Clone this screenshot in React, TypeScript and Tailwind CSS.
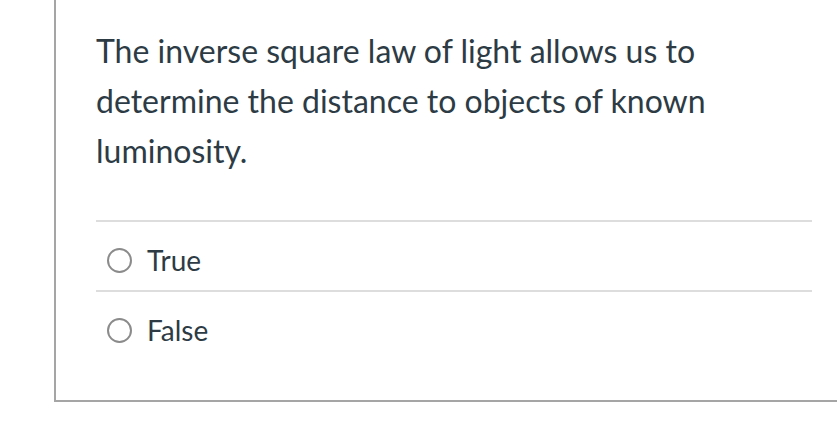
export default function App() {
  const options = ["True", "False"]
  return (
    <div className="h-[435px] w-[837px] overflow-hidden bg-white font-['Lato',sans-serif] text-[#2d3b45]">
      <div className="ml-[54px] w-[900px] border-b-2 border-l-2 border-[#a5a5a5] pb-[40px] pl-[40px] pt-[26px]">
        <div className="w-[716px]">
          <p className="w-[680px] text-[32px] leading-[50px]">
            The inverse square law of light allows us to determine the distance to objects of known luminosity.
          </p>
          <div className="mt-[44px]">
            {options.map((opt) => (
              <label key={opt} className="flex h-[70px] items-center border-t-2 border-[#dddddd] pl-[11px] pt-[8px]">
                <span className="h-[25px] w-[25px] shrink-0 rounded-full border-2 border-[#8b8b8b]" />
                <span className="ml-[15px] text-[28px] leading-[48px]">{opt}</span>
              </label>
            ))}
          </div>
        </div>
      </div>
    </div>
  )
}
